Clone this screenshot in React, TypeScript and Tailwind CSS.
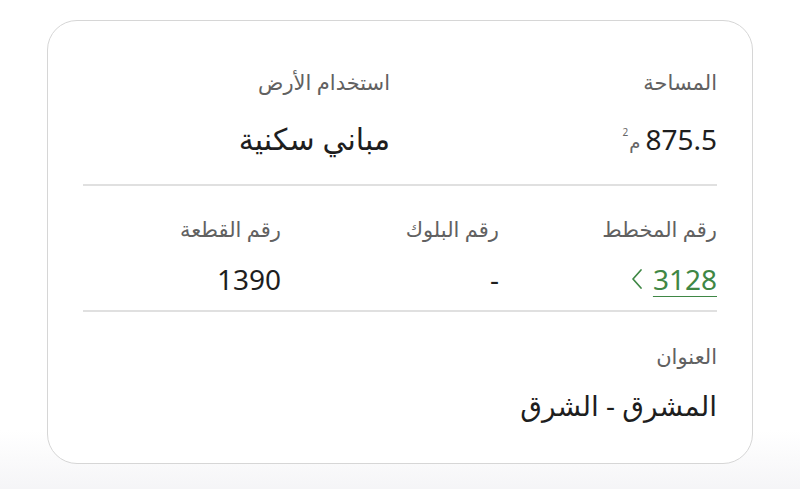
import React from "react";

function Label({ children }: { children: React.ReactNode }) {
  return <div className="h-[28px] leading-[28px] text-[21px] text-[#616161]">{children}</div>;
}

function Value({ children, className = "" }: { children: React.ReactNode; className?: string }) {
  return <div className={"h-[36px] leading-[36px] text-[#1e1e1e] " + className}>{children}</div>;
}

export default function App() {
  return (
    <div
      dir="rtl"
      className="w-[800px] h-[489px] bg-gradient-to-b from-white from-[88%] to-[#f5f5f7] pt-[20px] px-[47px] overflow-hidden"
      style={{ fontFamily: '"Noto Sans", "DejaVu Sans", sans-serif' }}
    >
      <div className="h-[444px] bg-white border-[1.5px] border-[#d6d6d6] rounded-[30px] pt-[47px] px-[35px]">
        <div className="grid grid-cols-2 gap-x-5">
          <div>
            <Label>المساحة</Label>
            <div className="mt-[25px] flex items-center gap-[5px]">
              <Value className="text-[28px]">875.5</Value>
              <span className="text-[18px] text-[#666] leading-none relative top-[3px] flex items-start">
                <span>م</span>
                <span className="text-[10px] relative -top-[6px] mr-[1px]">2</span>
              </span>
            </div>
          </div>
          <div>
            <Label>استخدام الأرض</Label>
            <Value className="mt-[25px] text-[30px]">مباني سكنية</Value>
          </div>
        </div>
        <div className="h-[2px] bg-[#e0e0e0] mt-[27px]" />
        <div className="grid grid-cols-3 gap-x-5 mt-[29px]">
          <div>
            <Label>رقم المخطط</Label>
            <div className="mt-[18px] flex items-center gap-[10px]">
              <Value className="text-[28px] !text-[#3f8745] underline underline-offset-[6px] decoration-[1px]">3128</Value>
              <svg width="12" height="22" viewBox="0 0 12 22" fill="none" stroke="#3f8745" strokeWidth="1.7" strokeLinecap="round" strokeLinejoin="round" className="shrink-0 w-[12px] h-[22px]">
                <path d="M10 2 L2 11 L10 20" />
              </svg>
            </div>
          </div>
          <div>
            <Label>رقم البلوك</Label>
            <Value className="mt-[18px] text-[28px]">-</Value>
          </div>
          <div>
            <Label>رقم القطعة</Label>
            <Value className="mt-[18px] text-[28px]">1390</Value>
          </div>
        </div>
        <div className="h-[2px] bg-[#e0e0e0] mt-[13px]" />
        <div className="mt-[30px]">
          <Label>العنوان</Label>
          <Value className="mt-[17px] text-[28px]">المشرق - الشرق</Value>
        </div>
      </div>
    </div>
  );
}
